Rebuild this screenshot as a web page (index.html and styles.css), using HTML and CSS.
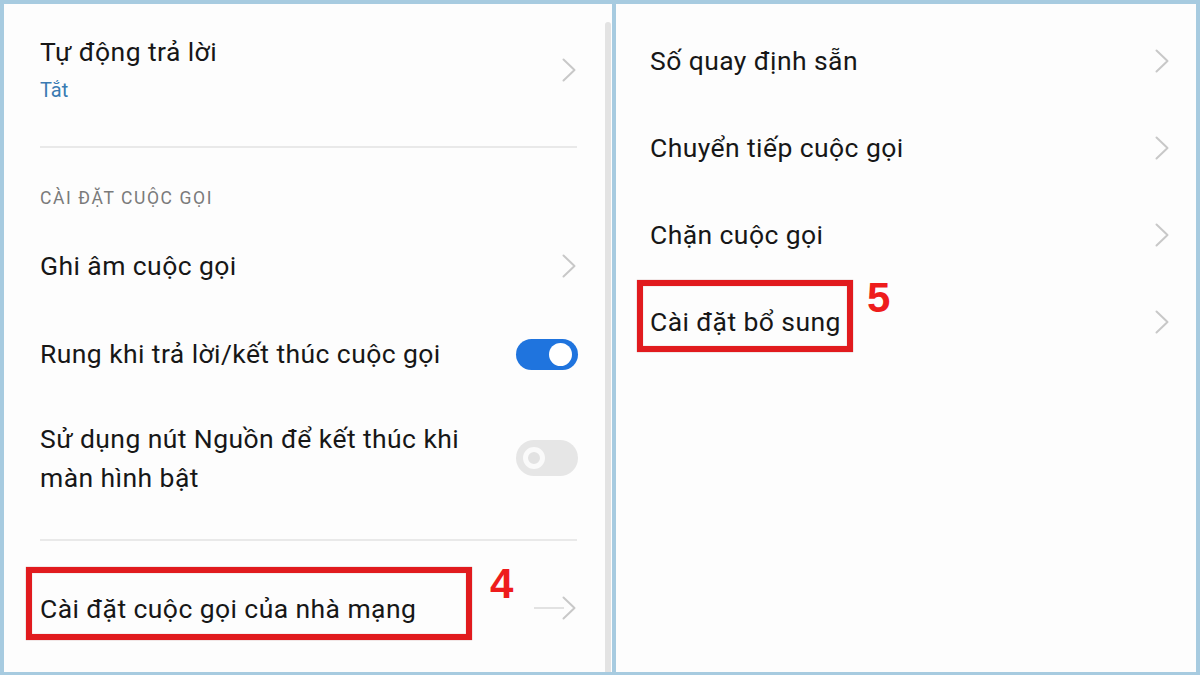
FILE: index.html
```html
<!DOCTYPE html>
<html lang="vi">
<head>
<meta charset="utf-8">
<link rel="stylesheet" href="styles.css">
</head>
<body>
<div class="frame">
  <section class="panel panel-left">
    <div class="row row-first">
      <div class="text">
        <div class="title">Tự động trả lời</div>
        <div class="sub">Tắt</div>
      </div>
      <svg class="chev" viewBox="0 0 14 24"><polyline points="1.5,1.5 12.5,12 1.5,22.5"/></svg>
    </div>
    <div class="divider"></div>
    <div class="header">CÀI ĐẶT CUỘC GỌI</div>
    <div class="row row-ghi">
      <div class="title">Ghi âm cuộc gọi</div>
      <svg class="chev" viewBox="0 0 14 24"><polyline points="1.5,1.5 12.5,12 1.5,22.5"/></svg>
    </div>
    <div class="row row-rung">
      <div class="title">Rung khi trả lời/kết thúc cuộc gọi</div>
      <span class="toggle on"><span class="knob"></span></span>
    </div>
    <div class="row row-su">
      <div class="title multi">Sử dụng nút Nguồn để kết thúc khi<br>màn hình bật</div>
      <span class="toggle off"><span class="knob"></span></span>
    </div>
    <div class="divider"></div>
    <div class="row row-last">
      <div class="title">Cài đặt cuộc gọi của nhà mạng</div>
      <span class="arrow"><span class="line"></span><svg class="chev" viewBox="0 0 14 24"><polyline points="1.5,1.5 12.5,12 1.5,22.5"/></svg></span>
      <span class="mark mark-4"></span>
      <span class="num num-4">4</span>
    </div>
    <div class="scrollbar"></div>
  </section>
  <section class="panel panel-right">
    <div class="row rrow">
      <div class="title">Số quay định sẵn</div>
      <svg class="chev" viewBox="0 0 14 24"><polyline points="1.5,1.5 12.5,12 1.5,22.5"/></svg>
    </div>
    <div class="row rrow">
      <div class="title">Chuyển tiếp cuộc gọi</div>
      <svg class="chev" viewBox="0 0 14 24"><polyline points="1.5,1.5 12.5,12 1.5,22.5"/></svg>
    </div>
    <div class="row rrow">
      <div class="title">Chặn cuộc gọi</div>
      <svg class="chev" viewBox="0 0 14 24"><polyline points="1.5,1.5 12.5,12 1.5,22.5"/></svg>
    </div>
    <div class="row rrow">
      <div class="title">Cài đặt bổ sung</div>
      <svg class="chev" viewBox="0 0 14 24"><polyline points="1.5,1.5 12.5,12 1.5,22.5"/></svg>
      <span class="mark mark-5"></span>
      <span class="num num-5">5</span>
    </div>
  </section>
</div>
</body>
</html>
```

FILE: styles.css
```css
* { box-sizing: border-box; }
html, body { margin: 0; padding: 0; }
body {
  width: 1200px;
  height: 675px;
  overflow: hidden;
  font-family: Roboto, "Noto Sans", "DejaVu Sans", sans-serif;
  color: #171717;
}
.frame {
  width: 1200px;
  height: 675px;
  background: #a7cbe0;
  padding: 4px 4px 3px 4px;
  display: grid;
  grid-template-columns: 608px 580px;
  column-gap: 4px;
}
.panel {
  background: #fdfdfd;
  position: relative;
  height: 668px;
}
.panel-left { padding: 0 35px 0 36px; }
.panel-right { padding: 13px 26px 0 34px; }

.row {
  display: flex;
  align-items: center;
  justify-content: space-between;
  position: relative;
}
.title {
  font-size: 26.5px;
  line-height: 30px;
  letter-spacing: 0.42px;
}
.title.multi { line-height: 39px; }
.sub {
  margin-top: 10px;
  font-size: 20px;
  line-height: 26px;
  color: #3a7bb2;
}
.row-first { padding: 33px 0 43px; }
.divider { height: 2px; background: #e9e9e9; }
.header {
  padding: 38px 0 0;
  height: 74px;
  font-size: 17.5px;
  line-height: 24px;
  letter-spacing: 1.6px;
  color: #7a7a7a;
}
.row-ghi { height: 88px; }
.row-rung { height: 88px; }
.row-su { height: 120px; margin-bottom: 21px; }
.row-last { height: 130px; padding-top: 6px; }

.chev {
  width: 14px;
  height: 24px;
  display: block;
  flex: none;
  margin-right: 1px;
  fill: none;
  stroke: #c8c8c8;
  stroke-width: 2;
  stroke-linecap: round;
  stroke-linejoin: round;
}

.arrow { display: flex; align-items: center; margin-top: -2px; }
.arrow .line { width: 30px; height: 2px; background: #e2e2e2; margin-right: -2px; }

.toggle {
  width: 62px;
  height: 31px;
  border-radius: 16px;
  position: relative;
  flex: none;
  margin-right: -1px;
}
.toggle.on { background: #1f74de; }
.toggle.on .knob {
  position: absolute;
  right: 6px;
  top: 4px;
  width: 23px;
  height: 23px;
  border-radius: 50%;
  background: #fff;
}
.toggle.off {
  background: #e6e6e6;
  height: 36px;
  border-radius: 18px;
}
.toggle.off .knob {
  position: absolute;
  left: 7px;
  top: 7px;
  width: 22px;
  height: 22px;
  border-radius: 50%;
  background: #e2e2e2;
  border: 5px solid #fafafa;
}

.scrollbar {
  position: absolute;
  right: 1px;
  top: 18px;
  bottom: 0;
  width: 6px;
  background: #e3e3e3;
  border-radius: 3px 3px 0 0;
}

.rrow { height: 87px; }

.mark {
  position: absolute;
  border: 6px solid #e11b1e;
  box-shadow: 0 0 1px rgba(120,0,0,.5), inset 0 0 1px rgba(120,0,0,.5);
}
.mark-4 { left: -14px; top: 26px; width: 446px; height: 73px; }
.mark-5 { left: -13px; top: 2px; width: 216px; height: 72px; }
.num {
  position: absolute;
  font-family: "Liberation Sans", Arial, sans-serif;
  font-weight: bold;
  font-size: 42px;
  line-height: 42px;
  color: #ee1c1c;
}
.num-4 { left: 450px; top: 22px; }
.num-5 { left: 217px; top: -1px; }
```
